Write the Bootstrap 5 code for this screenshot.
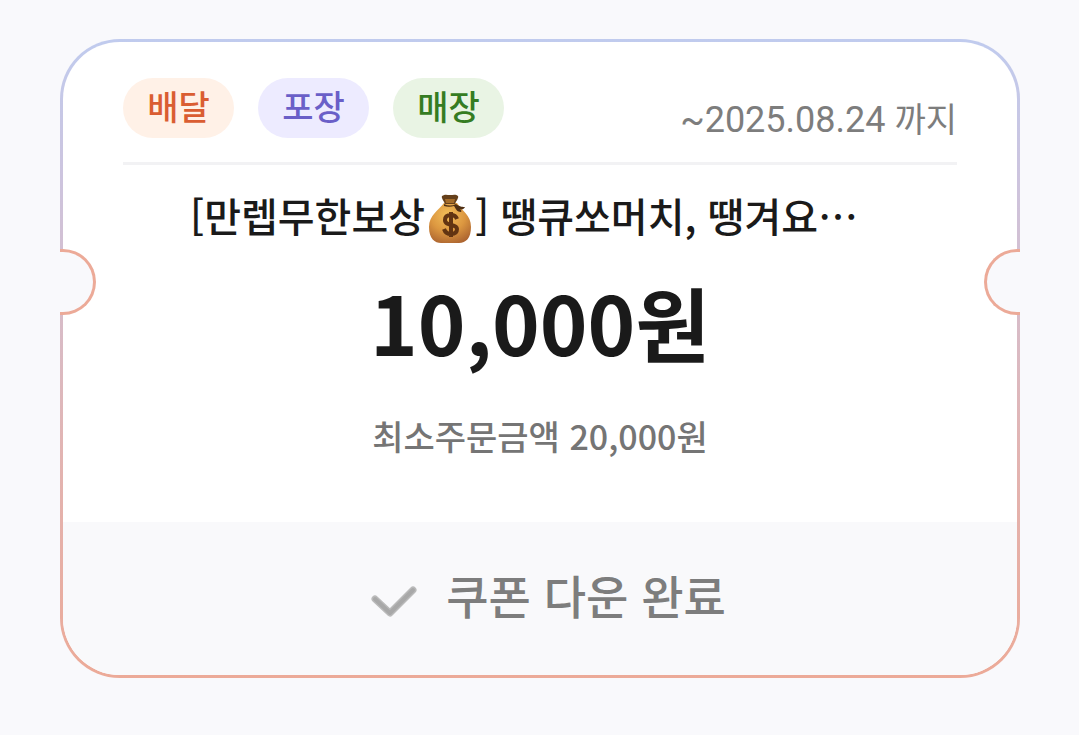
<!DOCTYPE html>
<html lang="ko">
<head>
<meta charset="utf-8">
<meta name="viewport" content="width=device-width, initial-scale=1">
<title>쿠폰</title>
<link href="https://cdn.jsdelivr.net/npm/bootstrap@5.3.0/dist/css/bootstrap.min.css" rel="stylesheet">
<style>
  body { background: #f9f9fc; font-family: "Noto Sans CJK KR", sans-serif; color: #1a1a1a; }
  .page { padding: 39px 59px 57px 60px; }
  .coupon {
    border: 3px solid transparent; border-radius: 60px;
    background: linear-gradient(#fff, #fff) padding-box,
                linear-gradient(#c0cbee, #cdc4de 22%, #e2b4b2 65%, #ecaa98) border-box;
  }
  .coupon-body { padding: 36px 60px 60px; }
  .coupon-head { height: 87px; border-bottom: 3px solid #f2f2f4; }
  .kind { min-width: 111px; height: 60px; line-height: 56px; font-size: 34px; font-weight: 500; }
  .kind-delivery { background: #fff1e7; color: #da5d32; }
  .kind-pickup { background: #edebff; color: #6a5fc8; }
  .kind-store { background: #e9f4e4; color: #357c22; }
  .until { font-family: Roboto, "Noto Sans CJK KR", sans-serif; font-size: 36px; line-height: 44px; color: #7d7d7d; }
  .until-word { font-size: 34px; }
  .coupon-title { font-size: 40px; line-height: 60px; font-weight: 500; margin-top: 20px; padding-right: 32px; }
  .bag { width: 50px; height: 52px; margin-top: 8px; }
  .amount { font-size: 81px; line-height: 100px; font-weight: 700; margin-top: 26px; }
  .minimum { font-size: 34px; line-height: 52px; font-weight: 500; color: #757575; margin-top: 39px; }
  .coupon-done { background: #f9f9fb; color: #7d7d7d; height: 153px; padding: 0 0 8px 16px; border-radius: 0 0 57px 57px; font-size: 46px; font-weight: 500; }
  .coupon-done svg { width: 48px; height: 34px; margin: 12px 28px 0 0; }
  .notch { width: 36px; height: 66px; top: 207px; background: #f9f9fc; border: 3px solid #ecaa98; }
  .notch-start { left: -3px; border-left: 0; border-radius: 0 33px 33px 0; }
  .notch-end { right: -3px; border-right: 0; border-radius: 33px 0 0 33px; }
</style>
</head>
<body>
<main class="page">
  <article class="coupon position-relative">
    <span class="notch notch-start position-absolute"></span>
    <span class="notch notch-end position-absolute"></span>
    <div class="coupon-body text-center">
      <div class="coupon-head d-flex justify-content-between">
        <div class="d-flex gap-4">
          <span class="kind kind-delivery rounded-pill">배달</span>
          <span class="kind kind-pickup rounded-pill">포장</span>
          <span class="kind kind-store rounded-pill">매장</span>
        </div>
        <div class="until align-self-end mb-3 pb-1">~2025.08.24 <span class="until-word">까지</span></div>
      </div>
      <h1 class="coupon-title mb-0 d-flex justify-content-center align-items-center text-nowrap">
        <span>[만렙무한보상</span>
        <svg class="bag" viewBox="0 0 48 52" role="img" aria-label="돈주머니">
          <defs>
            <radialGradient id="gold" cx=".45" cy=".3" r=".75">
              <stop offset="0" stop-color="#f3bf59"/><stop offset=".55" stop-color="#dc9740"/><stop offset="1" stop-color="#ad6530"/>
            </radialGradient>
          </defs>
          <path d="M18 10C13 17 3 22 3 34c0 12 6 16 12 16h18c7 0 12-5 12-16 0-12-9-16-14-24z" fill="url(#gold)"/>
          <path d="M16 3c3-2 5-1 8-1s6-1 8 1c1 2-2 5-3 8H19c-1-3-4-6-3-8z" fill="#65401b"/>
          <path d="M19 6h10l-1 4h-8z" fill="#a46c2a"/>
          <path d="M18 11c4 2 8 2 12 0 4 3 7 3 9 3-1 2-3 3-5 2 1 1 2 2 1 3-4 0-5-3-7-6-3 1-7 1-10 0z" fill="#503014"/>
          <path d="M31 26c-1-3-3-4-6-4-4 0-6 2-6 5 0 7 12 3 12 9 0 3-2 5-6 5s-6-2-7-5M25 19v25" fill="none" stroke="#623412" stroke-width="4"/>
        </svg>
        <span>] 땡큐쏘머치, 땡겨요⋯</span>
      </h1>
      <div class="amount">10,000원</div>
      <div class="minimum">최소주문금액 20,000원</div>
    </div>
    <button type="button" class="coupon-done w-100 border-0 d-flex justify-content-center align-items-center">
      <svg viewBox="0 0 48 34" fill="none" aria-hidden="true">
        <path d="M5 15l15 14L43 6" stroke="#bababa" stroke-width="7" stroke-linecap="round" stroke-linejoin="round"/>
        <path d="M5 15l15 14L43 6" stroke="#a8a8a8" stroke-width="4" stroke-linecap="round" stroke-linejoin="round"/>
      </svg>
      <span>쿠폰 다운 완료</span>
    </button>
  </article>
</main>
<script src="https://cdn.jsdelivr.net/npm/bootstrap@5.3.0/dist/js/bootstrap.bundle.min.js"></script>
</body>
</html>
